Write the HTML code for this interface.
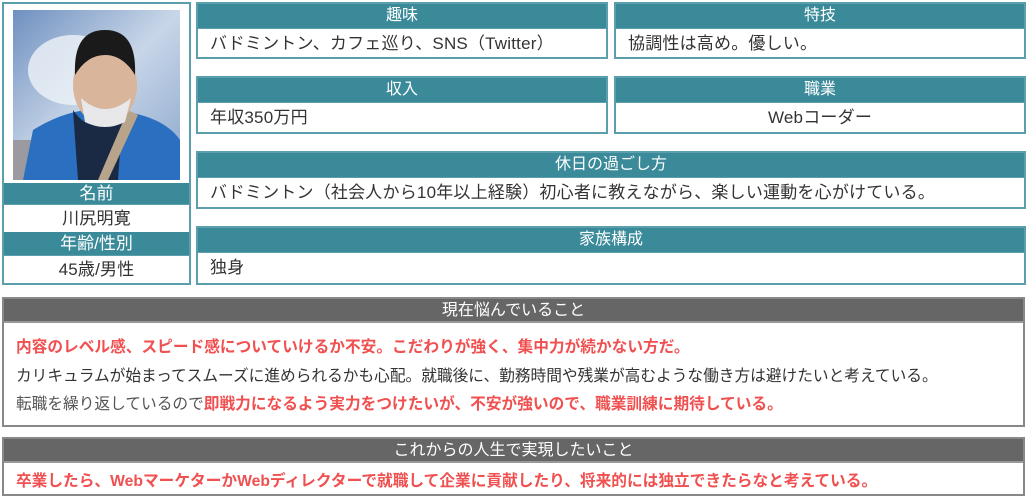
<!DOCTYPE html>
<html><head><meta charset="utf-8"><style>
*{margin:0;padding:0;box-sizing:border-box}
body{width:1026px;height:498px;background:#fff;position:relative;overflow:hidden;font-family:"Liberation Sans","Noto Sans CJK JP",sans-serif;color:#333;font-size:15px}
.box{position:absolute;border:2px solid #5a9fab;background:#fff}
.h{background:#3a8a9a;color:#fff;text-align:center;height:24px;line-height:24px;font-size:16px}
.v{padding-left:12px;line-height:29px;height:29px;border-top:1px solid #5a9fab;font-size:17px;letter-spacing:0.2px;white-space:nowrap}
.c{text-align:center;padding-left:0}
.gbox{position:absolute;left:2px;width:1023px;border:2px solid #888;background:#fff}
.gh{background:#666;color:#fff;text-align:center;height:24px;line-height:24px;font-size:16px;border-bottom:2px solid #999}
.r{color:#f05050;font-weight:bold}
.ln{padding-left:12px;height:28.5px;line-height:28.5px;white-space:nowrap;font-size:15.7px}
</style></head><body>
<div class="box" style="left:2px;top:2px;width:189px;height:283px">
 <svg style="position:absolute;left:9px;top:6px" width="167" height="170" viewBox="0 0 167 170">
  <defs><linearGradient id="s" x1="0" y1="0" x2="1" y2="1"><stop offset="0" stop-color="#6f90c0"/><stop offset=".5" stop-color="#c8d6e8"/><stop offset="1" stop-color="#8aa6cc"/></linearGradient></defs>
  <rect width="167" height="170" fill="url(#s)"/>
  <ellipse cx="60" cy="60" rx="45" ry="35" fill="#eef2f8" opacity=".8"/>
  <rect x="0" y="130" width="50" height="40" fill="#9a9aa0"/>
  <path d="M10 170 L20 120 Q60 95 100 100 Q150 105 167 130 L167 170Z" fill="#2a6fc0"/>
  <path d="M60 100 Q80 130 110 100 L105 170 L65 170Z" fill="#1a2a45"/>
  <path d="M115 100 L125 105 L95 170 L85 170Z" fill="#b8a48a"/>
  <ellipse cx="92" cy="75" rx="32" ry="40" fill="#d9b59c"/>
  <path d="M62 65 Q60 20 92 20 Q124 20 122 65 Q110 45 92 45 Q74 45 62 65Z" fill="#1a1a1a"/>
  <path d="M68 88 Q92 110 118 88 L112 112 Q92 122 72 112Z" fill="#e8e8ea"/>
 </svg>
 <div style="position:absolute;left:0;right:0;top:179px">
  <div class="h" style="height:21px;line-height:21px;font-size:17px">名前</div>
  <div class="v c" style="height:28px;line-height:28px">川尻明寛</div>
  <div class="h" style="height:23px;line-height:23px;font-size:17px">年齢/性別</div>
  <div class="v c" style="height:28px;line-height:28px">45歳/男性</div>
 </div>
</div>
<div class="box" style="left:196px;top:2px;width:412px;height:57px"><div class="h">趣味</div><div class="v">バドミントン、カフェ巡り、SNS（Twitter）</div></div>
<div class="box" style="left:614px;top:2px;width:412px;height:57px"><div class="h">特技</div><div class="v">協調性は高め。優しい。</div></div>
<div class="box" style="left:196px;top:76px;width:412px;height:58px"><div class="h">収入</div><div class="v">年収350万円</div></div>
<div class="box" style="left:614px;top:76px;width:412px;height:58px"><div class="h">職業</div><div class="v c">Webコーダー</div></div>
<div class="box" style="left:196px;top:151px;width:830px;height:58px"><div class="h">休日の過ごし方</div><div class="v">バドミントン（社会人から10年以上経験）初心者に教えながら、楽しい運動を心がけている。</div></div>
<div class="box" style="left:196px;top:226px;width:830px;height:59px"><div class="h">家族構成</div><div class="v">独身</div></div>
<div class="gbox" style="top:297px;height:130px"><div class="gh">現在悩んでいること</div>
 <div style="padding-top:11px">
 <div class="ln r">内容のレベル感、スピード感についていけるか不安。こだわりが強く、集中力が続かない方だ。</div>
 <div class="ln">カリキュラムが始まってスムーズに進められるかも心配。就職後に、勤務時間や残業が高むような働き方は避けたいと考えている。</div>
 <div class="ln" style="color:#555">転職を繰り返しているので<span class="r">即戦力になるよう実力をつけたいが、不安が強いので、職業訓練に期待している。</span></div>
 </div>
</div>
<div class="gbox" style="top:437px;height:59px"><div class="gh">これからの人生で実現したいこと</div>
 <div class="ln r" style="height:30px;line-height:30px;padding-top:4px">卒業したら、WebマーケターかWebディレクターで就職して企業に貢献したり、将来的には独立できたらなと考えている。</div>
</div>
</body></html>
